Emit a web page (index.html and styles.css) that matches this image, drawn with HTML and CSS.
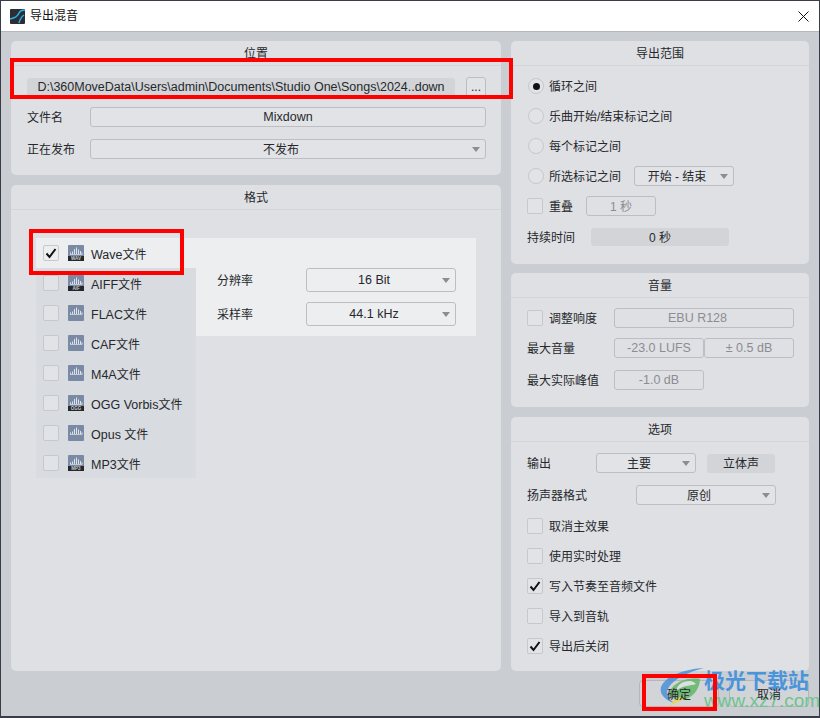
FILE: index.html
```html
<!DOCTYPE html>
<html lang="zh-CN">
<head>
<meta charset="utf-8">
<title>导出混音</title>
<link rel="stylesheet" href="styles.css">
</head>
<body>
<svg class="defs" width="0" height="0" aria-hidden="true">
  <symbol id="check" viewBox="0 0 16 16"><path d="M3.5 8.500 L6.500 12 L12.500 4" fill="none" stroke="#111" stroke-width="2"/></symbol>
  <symbol id="wave" viewBox="0 0 16 16">
    <rect width="16" height="16" rx="1" fill="#7a89a4"/>
    <path d="M2.500 7.500v2M4.500 6.500v3.500M6.500 4v6M8.500 2.500v7.500M10.500 4.500v5.500M12.500 6v4M14 7.500v2" fill="none" stroke="#dfe4ec" stroke-width="1"/>
    <path d="M2 9.500h12" stroke="#c3cad6" stroke-width="1"/>
  </symbol>
</svg>

<div class="window">
  <header class="titlebar">
    <svg class="app-logo" width="15" height="15" viewBox="0 0 15 15"><rect width="15" height="15" rx="1" fill="#2b2f35"/><path d="M0 10 C5 9 8 7 9 4 C10 2 12 1 15 1 M9 14 C10 10 11 8 14 6" fill="none" stroke="#27b3e6" stroke-width="1.500"/></svg>
    <span class="title">导出混音</span>
    <svg class="close" width="11" height="11" viewBox="0 0 11 11"><path d="M.5 .5 L10.500 10.500 M10.500 .5 L.5 10.500" stroke="#111" stroke-width="1"/></svg>
  </header>

  <main class="content">
    <div class="columns">
      <div class="col col-left">
        <section class="panel h-location">
          <h2 class="panel-head">位置</h2>
          <div class="panel-body pad-location">
            <div class="row">
              <div class="path lat">D:\360MoveData\Users\admin\Documents\Studio One\Songs\2024..down</div>
              <div class="field browse">...</div>
            </div>
            <div class="row mt-10">
              <span class="label w-63">文件名</span>
              <div class="field grow lat">Mixdown</div>
            </div>
            <div class="row mt-12">
              <span class="label w-63">正在发布</span>
              <div class="field select grow cjk">不发布</div>
            </div>
          </div>
        </section>

        <section class="panel fill">
          <h2 class="panel-head">格式</h2>
          <div class="format-area">
            <ul class="format-list">
              <li class="format active"><span class="box"><svg width="16" height="16"><use href="#check"/></svg></span>
                <svg class="ficon" width="16" height="16" viewBox="0 0 16 16"><use href="#wave" width="16" height="16"/><rect y="11" width="16" height="5" fill="#26282c"/><text x="8" y="15" class="tag">WAV</text></svg><span class="fname"><span class="lat">Wave</span>文件</span></li>
              <li class="format"><span class="box"></span>
                <svg class="ficon" width="16" height="16" viewBox="0 0 16 16"><use href="#wave" width="16" height="16"/><rect y="11" width="16" height="5" fill="#26282c"/><text x="8" y="15" class="tag">AIF</text></svg><span class="fname"><span class="lat">AIFF</span>文件</span></li>
              <li class="format"><span class="box"></span>
                <svg class="ficon" width="16" height="16"><use href="#wave"/></svg><span class="fname"><span class="lat">FLAC</span>文件</span></li>
              <li class="format"><span class="box"></span>
                <svg class="ficon" width="16" height="16"><use href="#wave"/></svg><span class="fname"><span class="lat">CAF</span>文件</span></li>
              <li class="format"><span class="box"></span>
                <svg class="ficon" width="16" height="16"><use href="#wave"/></svg><span class="fname"><span class="lat">M4A</span>文件</span></li>
              <li class="format"><span class="box"></span>
                <svg class="ficon" width="16" height="16" viewBox="0 0 16 16"><use href="#wave" width="16" height="16"/><rect y="11" width="16" height="5" fill="#26282c"/><text x="8" y="15" class="tag">OGG</text></svg><span class="fname"><span class="lat">OGG Vorbis</span>文件</span></li>
              <li class="format"><span class="box"></span>
                <svg class="ficon" width="16" height="16"><use href="#wave"/></svg><span class="fname"><span class="lat">Opus </span>文件</span></li>
              <li class="format"><span class="box"></span>
                <svg class="ficon" width="16" height="16" viewBox="0 0 16 16"><use href="#wave" width="16" height="16"/><rect y="11" width="16" height="5" fill="#26282c"/><text x="8" y="15" class="tag">MP3</text></svg><span class="fname"><span class="lat">MP3</span>文件</span></li>
            </ul>
            <div class="format-detail">
              <div class="detail-row"><span class="label w-89">分辨率</span><div class="field select tall w-150 lat">16 Bit</div></div>
              <div class="detail-row mt-10"><span class="label w-89">采样率</span><div class="field select tall w-150 lat">44.1 kHz</div></div>
            </div>
          </div>
        </section>
      </div>

      <div class="col col-right">
        <section class="panel h-range">
          <h2 class="panel-head">导出范围</h2>
          <div class="panel-body pad-range">
            <div class="opt"><span class="radio on"></span><span class="label">循环之间</span></div>
            <div class="opt"><span class="radio"></span><span class="label">乐曲开始/结束标记之间</span></div>
            <div class="opt"><span class="radio"></span><span class="label">每个标记之间</span></div>
            <div class="opt"><span class="radio"></span><span class="label w-85">所选标记之间</span><div class="field select w-100 cjk">开始 - 结束</div></div>
            <div class="opt"><span class="box"></span><span class="label w-37">重叠</span><div class="field disabled w-70 cjk">1 秒</div></div>
            <div class="row duration"><span class="label w-64">持续时间</span><div class="readout w-138 cjk">0 秒</div></div>
          </div>
        </section>

        <section class="panel h-volume">
          <h2 class="panel-head">音量</h2>
          <div class="panel-body pad-volume">
            <div class="row"><span class="box"></span><span class="label w-65">调整响度</span><div class="field disabled w-180 nudge lat">EBU R128</div></div>
            <div class="row mt-10"><span class="label w-87">最大音量</span><div class="field disabled w-90 lat">-23.0 LUFS</div><div class="field disabled w-90 lat">± 0.5 dB</div></div>
            <div class="row mt-12"><span class="label w-87">最大实际峰值</span><div class="field disabled w-90 lat">-1.0 dB</div></div>
          </div>
        </section>

        <section class="panel fill">
          <h2 class="panel-head">选项</h2>
          <div class="panel-body pad-options">
            <div class="row"><span class="label w-69">输出</span><div class="field select w-100 cjk">主要</div><div class="readout w-68 ml-11 cjk">立体声</div></div>
            <div class="row mt-12"><span class="label w-109">扬声器格式</span><div class="field select w-140 cjk">原创</div></div>
            <div class="checks">
              <div class="opt"><span class="box"></span><span class="label">取消主效果</span></div>
              <div class="opt"><span class="box"></span><span class="label">使用实时处理</span></div>
              <div class="opt"><span class="box"><svg width="16" height="16"><use href="#check"/></svg></span><span class="label">写入节奏至音频文件</span></div>
              <div class="opt"><span class="box"></span><span class="label">导入到音轨</span></div>
              <div class="opt"><span class="box"><svg width="16" height="16"><use href="#check"/></svg></span><span class="label">导出后关闭</span></div>
            </div>
          </div>
        </section>
      </div>
    </div>

    <footer class="footer">
      <button class="btn cjk"><span class="btn-text">确定</span></button>
      <button class="btn cjk"><span class="btn-text">取消</span></button>
    </footer>
  </main>

  <div class="watermark">
    <svg class="wm-logo" width="46" height="40" viewBox="0 0 46 40">
      <path d="M44 1 C26 2 6 8 1 20 C-1 27 5 33 14 36 C8 31 5 26 9 20 C14 12 28 5 44 1Z" fill="#4a92d8"/>
      <path d="M40 12 C28 10 14 15 10 24 C8 30 14 33 22 33 C32 32 40 22 40 12Z" fill="#63b867"/>
      <path d="M30 14 C22 14 16 19 17 23 C24 18 30 19 36 17 C34 15 32 14 30 14Z" fill="#dfe3e4"/>
      <path d="M10 39 L26 31 L20 30 L14 33Z" fill="#e9d44f"/>
    </svg>
    <div class="wm-text">
      <span class="wm-cn">极光下载站</span>
      <span class="wm-url">www.xz7.com</span>
    </div>
  </div>

  <div class="mark mark-location"></div>
  <div class="mark mark-wave"></div>
  <div class="mark mark-ok"></div>
</div>
</body>
</html>
```

FILE: styles.css
```css
* { box-sizing: border-box; }
html, body { margin: 0; padding: 0; }
body {
  width: 820px;
  height: 718px;
  overflow: hidden;
  font-family: "Liberation Sans", "Noto Sans CJK SC", sans-serif;
  font-size: 12px;
  line-height: 16px;
  color: #26282c;
  background: #caced3;
}
.defs { position: absolute; }
.lat { font-size: 12.5px; }

.window {
  position: relative;
  width: 820px;
  height: 718px;
  display: flex;
  flex-direction: column;
  border: 1px solid #3a3d48;
  border-bottom-width: 2px;
  background: #caced3;
}

.titlebar {
  height: 31px;
  flex: none;
  display: flex;
  align-items: center;
  padding: 0 9px;
  background: #fff;
  border-bottom: 1px solid #b4b7bb;
}
.app-logo { flex: none; }
.title { margin-left: 5px; color: #111; font-size: 12px; }
.close { margin-left: auto; margin-right: 1px; }

.content {
  flex: 1;
  display: flex;
  flex-direction: column;
  padding: 9px 10px 9px 10px;
}
.columns { height: 630px; display: flex; gap: 10px; }
.col { display: flex; flex-direction: column; }
.col-left { width: 490px; gap: 10px; }
.col-right { width: 298px; }

.panel {
  background: #dfe0e4;
  border-radius: 5px;
  display: flex;
  flex-direction: column;
}
.fill { flex: 1; min-height: 0; }
.h-location { height: 134px; }
.h-range { height: 223px; }
.h-volume { height: 134px; margin-top: 9px; margin-bottom: 10px; }

.panel-head {
  margin: 0;
  height: 25px;
  flex: none;
  font-size: 12px;
  font-weight: 400;
  line-height: 26px;
  text-align: center;
  border-bottom: 1px solid #d3d5d9;
}
.panel-body { display: flex; flex-direction: column; }
.pad-location { padding: 11px 15px 0 16px; }
.pad-range { padding: 5px 16px 0 16px; }
.pad-volume { padding: 10px 15px 0 16px; }
.pad-options { padding: 11px 15px 0 16px; }

.row { display: flex; align-items: center; height: 20px; }
.mt-10 { margin-top: 10px; }
.mt-12 { margin-top: 12px; }
.ml-11 { margin-left: 11px; }
.label { flex: none; padding-top: 2px; }
.grow { flex: 1; }

.w-37 { width: 37px; }
.w-63 { width: 63px; }
.w-64 { width: 64px; }
.w-65 { width: 65px; }
.w-68 { width: 68px; }
.w-69 { width: 69px; }
.w-70 { width: 70px; }
.w-85 { width: 85px; }
.w-87 { width: 87px; }
.w-89 { width: 89px; }
.w-90 { width: 90px; }
.w-100 { width: 100px; }
.w-109 { width: 109px; }
.w-138 { width: 138px; }
.w-140 { width: 140px; }
.w-150 { width: 150px; }
.w-180 { width: 180px; }

.path {
  width: 428px;
  height: 19px;
  flex: none;
  background: #d2d4d8;
  border-radius: 3px;
  line-height: 19px;
  text-align: center;
  white-space: nowrap;
}
.browse { width: 20px; margin-left: 11px; flex: none; }

.field {
  position: relative;
  height: 20px;
  flex: none;
  display: flex;
  align-items: center;
  justify-content: center;
  background: #e2e3e6;
  border: 1px solid #bcbec2;
  border-radius: 3px;
  white-space: nowrap;
}
.grow.field { flex: 1; }
.select { padding-right: 14px; }
.nudge { padding-right: 13px; }
.cjk { padding-top: 2px; }
.select::after {
  content: "";
  position: absolute;
  right: 5px;
  top: 50%;
  margin-top: -2px;
  border-left: 4px solid transparent;
  border-right: 4px solid transparent;
  border-top: 5px solid #8a8d92;
}
.tall { height: 24px; background: #eceef0; }
.disabled { color: #8b8d91; background: #dfe0e4; }

.readout {
  height: 18px;
  flex: none;
  display: flex;
  align-items: center;
  justify-content: center;
  background: #d2d4d8;
  border-radius: 3px;
}
.duration { height: 18px; margin-top: 7px; }
.pad-options .readout { height: 19px; }

.opt { display: flex; align-items: center; height: 30px; }
.checks { margin-top: 6px; }

.box {
  width: 16px;
  height: 16px;
  flex: none;
  margin-right: 6px;
  background: #e2e3e6;
  border: 1px solid #c6c8cc;
  border-radius: 2px;
  position: relative;
}
.box svg { position: absolute; left: -1px; top: -1px; }
.radio {
  width: 16px;
  height: 16px;
  flex: none;
  margin: 0 5px 0 1px;
  border: 1px solid #c6c8cc;
  border-radius: 50%;
  background: #e2e3e6;
  position: relative;
}
.radio.on::after {
  content: "";
  position: absolute;
  left: 3.5px;
  top: 3.5px;
  width: 7px;
  height: 7px;
  border-radius: 50%;
  background: #111;
}

.format-area {
  display: flex;
  align-items: flex-start;
  width: 440px;
  margin: 28px 0 0 25px;
}
.format-list {
  list-style: none;
  margin: 0;
  padding: 0;
  width: 160px;
  flex: none;
  background: #d8dbdf;
}
.format {
  height: 30px;
  display: flex;
  align-items: center;
  padding-left: 7px;
}
.format.active { background: #eceef0; }
.format .box { margin-right: 9px; }
.format.active .box { background: #eceef0; }
.ficon { flex: none; margin-right: 7px; }
.fname { padding-top: 3px; white-space: pre; }
.tag {
  font-family: "Liberation Sans", sans-serif;
  font-size: 4.5px;
  font-weight: 700;
  fill: #c9ccd1;
  text-anchor: middle;
}
.format-detail {
  flex: 1;
  height: 98px;
  padding: 30px 20px 0 21px;
  background: #eceef0;
}
.detail-row { display: flex; align-items: center; height: 24px; }

.footer {
  height: 27px;
  margin-top: 9px;
  flex: none;
  display: flex;
  justify-content: flex-end;
  gap: 10px;
}
.btn {
  width: 80px;
  height: 27px;
  padding: 2px 0 0;
  font: inherit;
  color: #26282c;
  background: #d2d4d8;
  border: 1px solid #b4b6ba;
  border-radius: 4px;
}
.btn-text { position: relative; z-index: 2; }

.mark {
  position: absolute;
  z-index: 3;
  border: 4px solid #fe0000;
  pointer-events: none;
}
.mark-location { left: 9px; top: 57px; width: 503px; height: 41px; }
.mark-wave { left: 28px; top: 228px; width: 155px; height: 46px; }
.mark-ok { left: 641px; top: 673px; width: 75px; height: 37px; }

.watermark {
  position: absolute;
  z-index: 1;
  left: 659px;
  top: 666px;
  display: flex;
  pointer-events: none;
}
.wm-logo { flex: none; opacity: .85; }
.wm-text { display: flex; flex-direction: column; margin-left: -2px; }
.wm-cn {
  font-family: "Noto Sans CJK SC", sans-serif;
  font-weight: 700;
  font-size: 21px;
  line-height: 24px;
  color: #4a94dc;
  white-space: nowrap;
}
.wm-url {
  font-family: "Liberation Sans", sans-serif;
  font-size: 19px;
  line-height: 20px;
  color: #6fc392;
  white-space: nowrap;
}
```
